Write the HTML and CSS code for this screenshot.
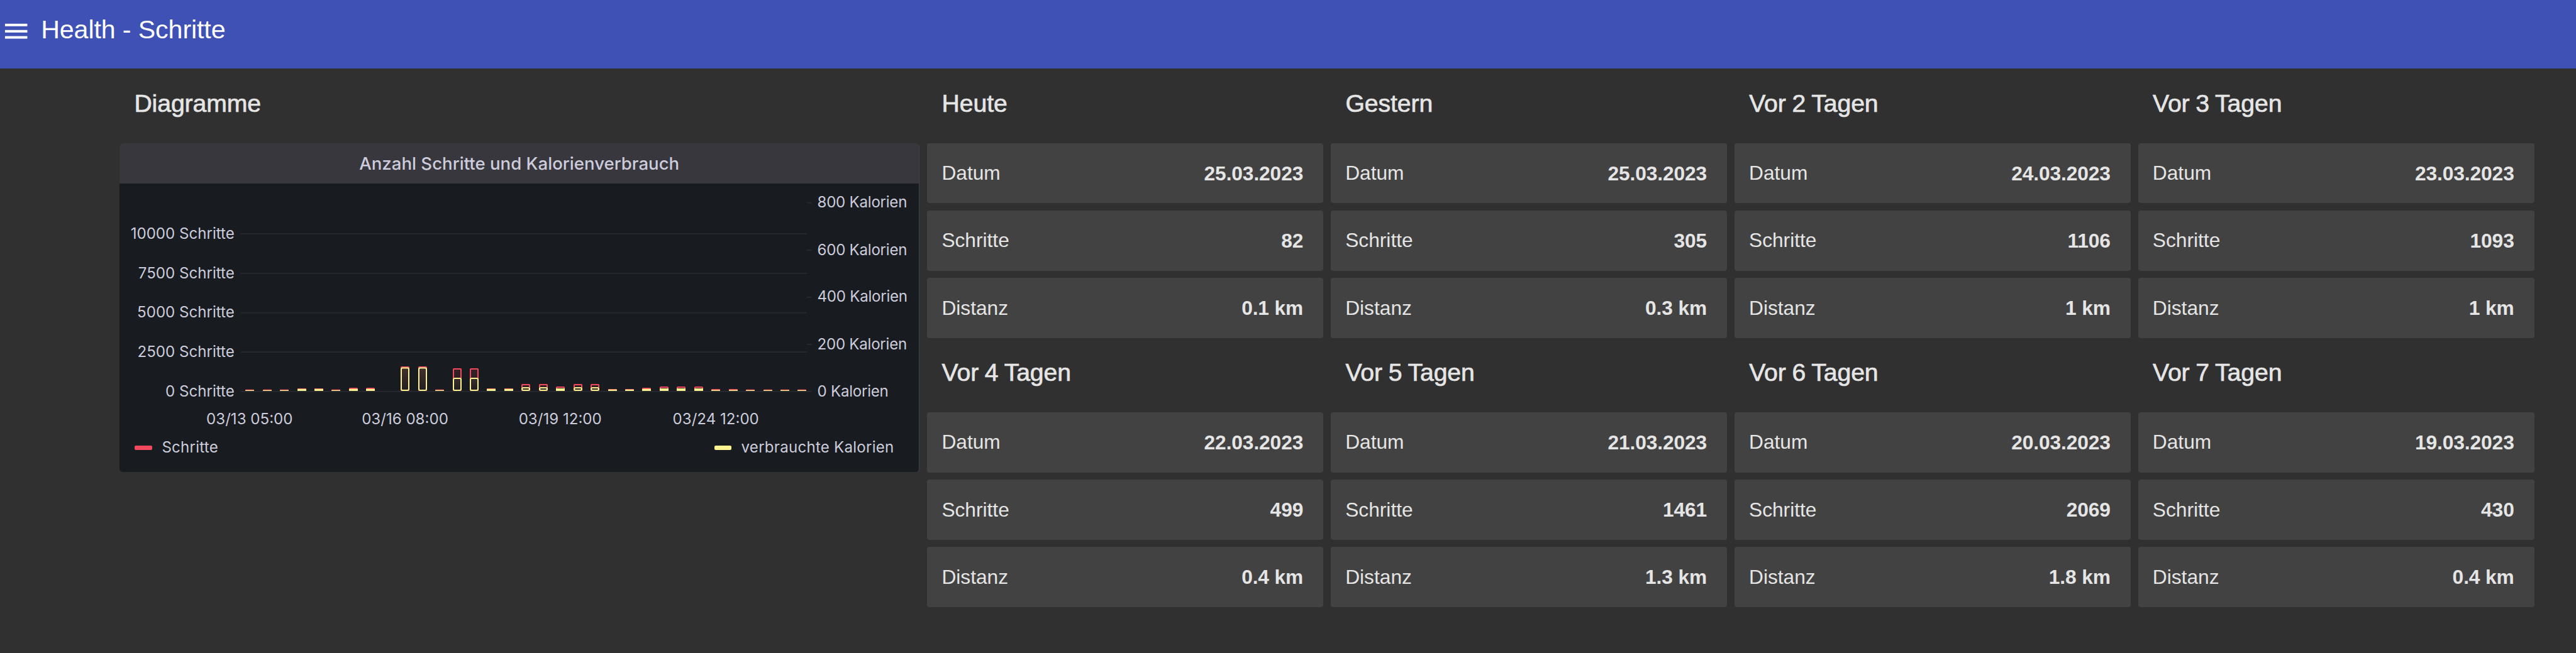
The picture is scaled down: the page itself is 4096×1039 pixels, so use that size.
FILE: index.html
```
<!DOCTYPE html>
<html lang="de">
<head>
    <meta charset="UTF-8">
    <title>Health - Schritte</title>
    <meta name="viewport" content="width=device-width, initial-scale=1.0">
    <link rel="stylesheet" href="styles.css">
</head>
<body>
    <header class="toolbar">
        <svg class="menu-icon" viewBox="0 0 24 24"><path d="M3 18h18v-2H3v2zm0-5h18v-2H3v2zm0-7v2h18V6H3z"/></svg>
        <h1 class="title">Health - Schritte</h1>
    </header>

    <main class="dashboard">
        <section class="charts">
            <h2 class="heading">Diagramme</h2>
            <div class="panel">
                <div class="panel-title">Anzahl Schritte und Kalorienverbrauch</div>
                <svg class="plot" viewBox="190 292 1272 400">
                    <defs>
                        <linearGradient id="fill-red" x1="0" y1="0" x2="0" y2="1">
                            <stop offset="0" stop-color="#f2495c" stop-opacity="0.14"/>
                            <stop offset="1" stop-color="#f2495c" stop-opacity="0.03"/>
                        </linearGradient>
                        <linearGradient id="fill-yellow" x1="0" y1="0" x2="0" y2="1">
                            <stop offset="0" stop-color="#fff899" stop-opacity="0.07"/>
                            <stop offset="1" stop-color="#fff899" stop-opacity="0.01"/>
                        </linearGradient>
                    </defs>
                    <g class="grid">
                        <path d="M382.6 372.2H1283M382.6 434.9H1283M382.6 497.6H1283M382.6 560.2H1283M382.6 622.9H1290.5"/>
                        <path d="M1283 322.6h7.5M1283 397.9h7.5M1283 472.8h7.5M1283 547.9h7.5"/>
                    </g>
                    <g class="axis axis-left">
                        <text x="372.8" y="379.8">10000 Schritte</text>
                        <text x="372.8" y="442.5">7500 Schritte</text>
                        <text x="372.8" y="505.2">5000 Schritte</text>
                        <text x="372.8" y="567.8">2500 Schritte</text>
                        <text x="372.8" y="630.5">0 Schritte</text>
                    </g>
                    <g class="axis axis-right">
                        <text x="1299.5" y="330.2">800 Kalorien</text>
                        <text x="1299.5" y="405.5">600 Kalorien</text>
                        <text x="1299.5" y="480.4">400 Kalorien</text>
                        <text x="1299.5" y="555.5">200 Kalorien</text>
                        <text x="1299.5" y="630.5">0 Kalorien</text>
                    </g>
                    <g class="axis axis-time">
                        <text x="396.8" y="674.8">03/13 05:00</text>
                        <text x="644" y="674.8">03/16 08:00</text>
                        <text x="890.7" y="674.8">03/19 12:00</text>
                        <text x="1138.2" y="674.8">03/24 12:00</text>
                    </g>
                    <g id="bars"></g>
                </svg>
                <div class="legend">
                    <span class="legend-item"><i class="swatch red"></i>Schritte</span>
                    <span class="legend-item"><i class="swatch yellow"></i>verbrauchte Kalorien</span>
                </div>
            </div>
        </section>

        <section class="days">
            <div class="day">
                <h2 class="heading">Heute</h2>
                <div class="card"><span>Datum</span><b>25.03.2023</b></div>
                <div class="card"><span>Schritte</span><b>82</b></div>
                <div class="card"><span>Distanz</span><b>0.1 km</b></div>
            </div>
            <div class="day">
                <h2 class="heading">Gestern</h2>
                <div class="card"><span>Datum</span><b>25.03.2023</b></div>
                <div class="card"><span>Schritte</span><b>305</b></div>
                <div class="card"><span>Distanz</span><b>0.3 km</b></div>
            </div>
            <div class="day">
                <h2 class="heading">Vor 2 Tagen</h2>
                <div class="card"><span>Datum</span><b>24.03.2023</b></div>
                <div class="card"><span>Schritte</span><b>1106</b></div>
                <div class="card"><span>Distanz</span><b>1 km</b></div>
            </div>
            <div class="day">
                <h2 class="heading">Vor 3 Tagen</h2>
                <div class="card"><span>Datum</span><b>23.03.2023</b></div>
                <div class="card"><span>Schritte</span><b>1093</b></div>
                <div class="card"><span>Distanz</span><b>1 km</b></div>
            </div>
            <div class="day">
                <h2 class="heading">Vor 4 Tagen</h2>
                <div class="card"><span>Datum</span><b>22.03.2023</b></div>
                <div class="card"><span>Schritte</span><b>499</b></div>
                <div class="card"><span>Distanz</span><b>0.4 km</b></div>
            </div>
            <div class="day">
                <h2 class="heading">Vor 5 Tagen</h2>
                <div class="card"><span>Datum</span><b>21.03.2023</b></div>
                <div class="card"><span>Schritte</span><b>1461</b></div>
                <div class="card"><span>Distanz</span><b>1.3 km</b></div>
            </div>
            <div class="day">
                <h2 class="heading">Vor 6 Tagen</h2>
                <div class="card"><span>Datum</span><b>20.03.2023</b></div>
                <div class="card"><span>Schritte</span><b>2069</b></div>
                <div class="card"><span>Distanz</span><b>1.8 km</b></div>
            </div>
            <div class="day">
                <h2 class="heading">Vor 7 Tagen</h2>
                <div class="card"><span>Datum</span><b>19.03.2023</b></div>
                <div class="card"><span>Schritte</span><b>430</b></div>
                <div class="card"><span>Distanz</span><b>0.4 km</b></div>
            </div>
        </section>
    </main>

    <script>
        // [Schritte, Kalorien] als Balkenhöhe, null = keine Daten
        var data = [
            [2.3, 1.3], [2.3, 1.3], [2.3, 1.3], [4, 3.2], [4, 3.2], [2.3, 1.3], [5, 3.2], [5, 3.2],
            null,
            [39, 37.6], [39, 37.6], [2.3, 1.3], [36, 21], [36, 21], [4, 3.2], [4, 3.2],
            [11, 6], [11, 6], [7, 4], [11, 6], [11, 6], [3.1, 2.2], [3.1, 2.2],
            [5, 3.2], [7, 4], [7, 4], [7, 4], [3.1, 1.4], [3.1, 1.4],
            [2.3, 1.3], [2.3, 1.3], [2.3, 1.3], [2.3, 1.3]
        ];
        var bars = document.getElementById('bars');
        var bottom = 622;
        var line = 2;

        function addBar(x, height, name) {
            var rect = document.createElementNS('http://www.w3.org/2000/svg', 'rect');
            var inset = height > line * 2 ? line / 2 : 0;
            rect.setAttribute('x', x + inset);
            rect.setAttribute('y', bottom - height + inset);
            rect.setAttribute('width', 14 - inset * 2);
            rect.setAttribute('height', height - inset * 2);
            rect.setAttribute('rx', height > 5 ? (name == 'yellow' ? 2 : 0.6) : 0.6);
            rect.setAttribute('class', (inset ? 'bar-' : 'flat-') + name);
            bars.appendChild(rect);
        }

        data.forEach(function(item, i) {
            if (!item) return;
            var x = Math.round(390.2 + i * 27.445);
            addBar(x, item[0], 'red');
            addBar(x, item[1], 'yellow');
        });
    </script>
</body>
</html>
```

FILE: styles.css
```
body {
    margin: 0;
    height: 1039px;
    overflow: hidden;
    background-color: #303030;
    color: #e5e5e5;
    font-family: "Liberation Sans", Arial, sans-serif;
}
.toolbar {
    display: flex;
    align-items: flex-start;
    height: 109.4px;
    background-color: #3f51b5;
    color: white;
}
.menu-icon {
    width: 47.4px;
    height: 47.4px;
    margin: 26px 15.8px 0 2px;
    fill: white;
}
.title {
    margin: 0;
    font-size: 41.2px;
    font-weight: 400;
    line-height: 94px;
    letter-spacing: -0.12px;
}
.dashboard {
    display: grid;
    grid-template-columns: 1272px 2555.3px;
    column-gap: 12.2px;
    align-items: start;
    padding-left: 190.2px;
}
.heading {
    margin: 0 0 7.4px;
    padding-left: 23.2px;
    font-size: 39.2px;
    font-weight: 400;
    line-height: 111.4px;
    letter-spacing: -0.1px;
    word-spacing: -1px;
    -webkit-text-stroke: 0.7px #e5e5e5;
}

/* Diagramm */
.panel {
    display: flex;
    flex-direction: column;
    box-sizing: border-box;
    height: 522.6px;
    background-color: #181b1f;
    border-right: 1px solid #424242;
    border-radius: 5px;
    overflow: hidden;
    color: #ccccdc;
    font-family: Inter, sans-serif;
}
.panel-title {
    height: 63.9px;
    background-color: #37373d;
    font-size: 27.6px;
    font-weight: 500;
    line-height: 65.5px;
    text-align: center;
}
.plot {
    display: block;
    width: 1272px;
    height: 400px;
}
.grid {
    stroke: rgba(204, 204, 220, 0.09);
    stroke-width: 1.7;
}
.axis {
    fill: #ccccdc;
    font-size: 24.1px;
}
.axis-left {
    text-anchor: end;
}
.axis-right {
    letter-spacing: -0.25px;
}
.axis-time {
    text-anchor: middle;
}
.bar-red {
    fill: url(#fill-red);
    stroke: #f2495c;
    stroke-width: 2;
}
.bar-yellow {
    fill: url(#fill-yellow);
    stroke: #fff48f;
    stroke-width: 2;
}
.flat-red {
    fill: #f2495c;
}
.flat-yellow {
    fill: #fff48f;
}
.legend {
    display: flex;
    justify-content: space-between;
    padding: 6.4px 39.6px 0 24.2px;
    font-size: 24.1px;
    line-height: 28px;
    letter-spacing: 0.01em;
}
.legend-item {
    display: flex;
    align-items: center;
    gap: 15.5px;
}
.swatch {
    width: 27.5px;
    height: 7.7px;
    border-radius: 2px;
}
.red {
    background-color: #f2495c;
}
.yellow {
    background-color: #fff48f;
}

/* Tage */
.days {
    display: grid;
    grid-template-columns: repeat(4, 1fr);
    column-gap: 12px;
}
.day {
    height: 428.1px;
}
.card {
    display: flex;
    justify-content: space-between;
    align-items: center;
    box-sizing: border-box;
    height: 95.3px;
    margin-bottom: 11.8px;
    padding: 1px 32px 0 23px;
    background-color: #424242;
    border-radius: 4px;
    font-size: 31.7px;
}
.card span {
    padding-bottom: 1px;
}
.card b {
    letter-spacing: -0.1px;
}
```
